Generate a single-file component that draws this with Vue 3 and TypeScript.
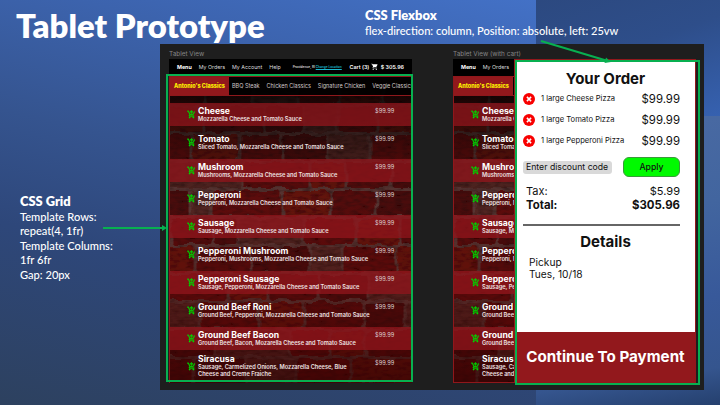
<script setup lang="ts">
interface MenuItem {
  name: string
  toppings: string
}
interface Brick {
  x: number
  y: number
  w: number
  h: number
  tone: string
}

const items: MenuItem[] = [
  { name: 'Cheese', toppings: 'Mozzarella Cheese and Tomato Sauce' },
  { name: 'Tomato', toppings: 'Sliced Tomato, Mozzarella Cheese and Tomato Sauce' },
  { name: 'Mushroom', toppings: 'Mushrooms, Mozzarella Cheese and Tomato Sauce' },
  { name: 'Pepperoni', toppings: 'Pepperoni, Mozzarella Cheese and Tomato Sauce' },
  { name: 'Sausage', toppings: 'Sausage, Mozzarella Cheese and Tomato Sauce' },
  { name: 'Pepperoni Mushroom', toppings: 'Pepperoni, Mushrooms, Mozzarella Cheese and Tomato Sauce' },
  { name: 'Pepperoni Sausage', toppings: 'Sausage, Pepperoni, Mozzarella Cheese and Tomato Sauce' },
  { name: 'Ground Beef Roni', toppings: 'Ground Beef, Pepperoni, Mozzarella Cheese and Tomato Sauce' },
  { name: 'Ground Beef Bacon', toppings: 'Ground Beef, Bacon, Mozarella Cheese and Tomato Sauce' },
  { name: 'Siracusa', toppings: 'Sausage, Carmelized Onions, Mozzarella Cheese, Blue\nCheese and Creme Fraiche' },
]
const allTabs = ['BBQ Steak', 'Chicken Classics', 'Signature Chicken', 'Veggie Classics']
const views = [
  { label: 'Tablet View', id: 'plain', cart: false, tabs: allTabs, links: ['My Orders', 'My Account', 'Help'] },
  { label: 'Tablet View (with cart)', id: 'order', cart: true, tabs: [], links: ['My Orders'] },
]
const order = ['1 large Cheese Pizza', '1 large Tomato Pizza', '1 large Pepperoni Pizza']

// Joint positions of every course of the brick wall, top to bottom.
const courses: number[][] = [
  [-10, 36, 84, 128, 170, 214, 260],
  [-14, 33, 94, 135, 168, 206, 260],
  [-30, 22, 70, 112, 158, 200, 260],
  [-20, 72, 140, 176, 222, 260],
  [-34, 20, 42, 112, 160, 206, 260],
  [0, 43, 68, 134, 186, 230, 260],
  [-20, 26, 80, 140, 172, 226, 260],
  [-8, 58, 98, 150, 198, 260],
  [-26, 30, 88, 134, 194, 236, 260],
  [-12, 46, 120, 160, 196, 260],
  [-30, 24, 76, 126, 180, 260],
]
const tones = ['#5a0d09', '#62100b', '#4e0a08', '#6a130b', '#552c27']
const bricks: Brick[] = courses.flatMap((joints, row) =>
  joints.slice(0, -1).map((x, i) => ({
    x: x + 1.5,
    y: row * 28 + 2,
    w: joints[i + 1] - x - 3,
    h: 25,
    tone: tones[(row * 3 + i * 2) % tones.length],
  })),
)
</script>

<template>
  <main class="slide">
    <h1 class="title">Tablet Prototype</h1>

    <section class="board">
      <figure v-for="view in views" :key="view.id" class="view">
        <figcaption>{{ view.label }}</figcaption>
        <div class="tablet" :class="{ covered: view.cart }">
          <header class="topbar">
            <b>Menu</b>
            <span v-for="link in view.links" :key="link">{{ link }}</span>
            <small v-if="!view.cart" class="place">Providence, RI <u>Change Location</u></small>
            <span v-if="!view.cart" class="basket">
              Cart (3)
              <svg viewBox="0 0 24 24"><path d="M7 18c-1.1 0-1.99.9-1.99 2S5.9 22 7 22s2-.9 2-2-.9-2-2-2zM1 2v2h2l3.6 7.59-1.35 2.45c-.16.28-.25.61-.25.96 0 1.1.9 2 2 2h12v-2H7.42c-.14 0-.25-.11-.25-.25l.03-.12.9-1.63h7.45c.75 0 1.41-.41 1.75-1.03l3.58-6.49A1 1 0 0 0 20 4H5.21l-.94-2H1zm16 16c-1.1 0-1.99.9-1.99 2s.89 2 1.99 2 2-.9 2-2-.9-2-2-2z" /></svg>
              $ 305.96
            </span>
          </header>
          <div class="body">
            <svg class="wall" viewBox="0 0 243 307">
              <defs>
                <filter :id="'rough-' + view.id" x="0" y="0" width="100%" height="100%">
                  <feTurbulence type="fractalNoise" baseFrequency="0.07" numOctaves="3" seed="4" result="n" />
                  <feDisplacementMap in="SourceGraphic" in2="n" scale="7" result="d" />
                  <feTurbulence type="fractalNoise" baseFrequency="0.12 0.3" numOctaves="2" seed="9" />
                  <feColorMatrix values="0 0 0 0 0  0 0 0 0 0  0 0 0 0 0  1.2 0 0 0 -0.42" result="g" />
                  <feMerge>
                    <feMergeNode in="d" />
                    <feMergeNode in="g" />
                  </feMerge>
                </filter>
                <linearGradient :id="'shade-' + view.id" x1="0" y1="0" x2="0" y2="1">
                  <stop offset="0" stop-color="#000" stop-opacity="0.88" />
                  <stop offset="0.14" stop-color="#080303" stop-opacity="0.6" />
                  <stop offset="0.26" stop-color="#180303" stop-opacity="0.36" />
                  <stop offset="0.4" stop-color="#300000" stop-opacity="0.1" />
                  <stop offset="0.7" stop-color="#480000" stop-opacity="0.3" />
                  <stop offset="1" stop-color="#300000" stop-opacity="0.66" />
                </linearGradient>
              </defs>
              <g :filter="`url(#rough-${view.id})`">
                <rect x="-10" y="-10" width="270" height="330" fill="#5c3a38" />
                <rect v-for="(b, i) in bricks" :key="i" :x="b.x" :y="b.y" :width="b.w" :height="b.h" :fill="b.tone" rx="2" />
              </g>
              <rect width="243" height="307" :fill="`url(#shade-${view.id})`" />
            </svg>
            <nav class="tabs">
              <b>Antonio's Classics</b>
              <span v-for="tab in view.tabs" :key="tab">{{ tab }}</span>
            </nav>
            <ul class="menu">
              <li v-for="item in items" :key="item.name">
                <svg viewBox="0 0 24 24"><path d="M11 9h2V6h3V4h-3V1h-2v3H8v2h3v3zm-4 9c-1.1 0-1.99.9-1.99 2S5.9 22 7 22s2-.9 2-2-.9-2-2-2zm10 0c-1.1 0-1.99.9-1.99 2s.89 2 1.99 2 2-.9 2-2-.9-2-2-2zm-9.83-3.25l.03-.12.9-1.63h7.45c.75 0 1.41-.41 1.75-1.03l3.86-7.01L19.42 4h-.01l-1.1 2-2.76 5H8.53l-.13-.27L6.16 6l-.95-2-.94-2H1v2h2l3.6 7.59-1.35 2.45c-.16.28-.25.61-.25.96 0 1.1.9 2 2 2h12v-2H7.42c-.13 0-.25-.11-.25-.25z" /></svg>
                <div class="dish">
                  <h3>{{ item.name }}</h3>
                  <p>{{ item.toppings }}</p>
                </div>
                <span v-if="!view.cart" class="price">$99.99</span>
              </li>
            </ul>
          </div>
          <aside v-if="view.cart" class="cart">
            <div class="sheet">
              <h2>Your Order</h2>
              <ul class="lines">
                <li v-for="line in order" :key="line">
                  <svg viewBox="0 0 12 12"><circle cx="6" cy="6" r="6" fill="#f80000" /><path d="M3.9 3.9l4.2 4.2M8.1 3.9L3.9 8.1" stroke="#fff" stroke-width="1.5" /></svg>
                  <span>{{ line }}</span>
                  <em>$99.99</em>
                </li>
              </ul>
              <div class="discount">
                <span class="code">Enter discount code</span>
                <button type="button">Apply</button>
              </div>
              <dl class="sums">
                <div><dt>Tax:</dt><dd>$5.99</dd></div>
                <div class="total"><dt>Total:</dt><dd>$305.96</dd></div>
              </dl>
              <hr />
              <h2>Details</h2>
              <p class="pickup">Pickup<br />Tues, 10/18</p>
            </div>
            <div class="pay">Continue To Payment</div>
          </aside>
        </div>
      </figure>
    </section>

    <aside class="note note-grid">
      <b>CSS Grid</b>
      <p>Template Rows:<br />repeat(4, 1fr)<br />Template Columns:<br />1fr 6fr<br />Gap: 20px</p>
    </aside>
    <aside class="note note-flex">
      <b>CSS Flexbox</b>
      <p>flex-direction: column, Position: absolute, left: 25vw</p>
    </aside>

    <svg class="marks" viewBox="0 0 720 405">
      <g fill="none" stroke="#08b050" stroke-width="2">
        <rect x="167" y="75" width="245" height="306" />
        <rect x="516" y="61" width="183" height="323" />
        <path d="M103 228H163" />
        <path d="M541 41L607 60.800" />
      </g>
      <path d="M162 225l5 3-5 3zM606 57.500l5 4.500-6.500 1z" fill="#08b050" />
    </svg>
  </main>
</template>

<style>
body {
  margin: 0;
  overflow: hidden;
}
</style>

<style scoped>
.slide {
  position: relative;
  display: grid;
  box-sizing: border-box;
  width: 720px;
  height: 405px;
  padding: 0 16px 15px;
  grid-template-rows: 44px 346px;
  justify-items: end;
  overflow: hidden;
  color: #fff;
  font-family: Lato, 'Open Sans', sans-serif;
  background:
    linear-gradient(160deg, #2c4980 0%, #2e4e8a 45%, #3661b0 100%) 536px 0 / 184px 116px no-repeat,
    linear-gradient(172deg, #4a6aa3 0%, #42659f 35%, #38599a 65%, #35558e 88%, #25406e 100%) 536px 116px / 184px 289px no-repeat,
    linear-gradient(194deg, #4371c6 0%, #3d65b1 18%, #35548f 45%, #2e477a 66%, #2d415f 100%) 0 0 / 536px 405px no-repeat;
}
h1, h2, h3, p, ul, dl, dd, figure {
  margin: 0;
  padding: 0;
}
ul {
  list-style: none;
}
.title {
  justify-self: start;
  font-size: 32.900px;
  line-height: 52px;
  font-weight: 800;
  white-space: nowrap;
}
.board {
  display: flex;
  box-sizing: border-box;
  width: 544px;
  height: 346px;
  padding: 4px 7px 0 9px;
  gap: 41px;
  background: #1e1e1e;
  font-family: Inter, sans-serif;
}
.view {
  width: 243px;
}
figcaption {
  height: 11px;
  font-size: 6.400px;
  line-height: 12px;
  color: #858585;
}
.tablet {
  position: relative;
  width: 243px;
  height: 324px;
  overflow: hidden;
}
.topbar {
  display: flex;
  align-items: center;
  box-sizing: border-box;
  height: 17px;
  padding: 0 8px 2px;
  gap: 7px;
  background: #000;
  color: #ddd;
  font-size: 5.300px;
  line-height: 8px;
  white-space: nowrap;
}
.topbar b {
  color: #fff;
}
.place {
  margin-left: 5px;
  font-size: 3.200px;
  font-weight: 600;
}
.place u {
  color: #1cb8cf;
}
.basket {
  display: flex;
  align-items: center;
  gap: 2px;
  margin-left: auto;
  color: #fff;
  font-weight: 600;
}
.basket svg {
  width: 7.500px;
  height: 7.500px;
  fill: #fff;
}
.body {
  position: relative;
  box-sizing: border-box;
  height: 307px;
  border: 1px solid #8f171b;
  background: #180c0a;
}
.covered .body {
  width: 62px;
  overflow: hidden;
}
.wall {
  position: absolute;
  left: 0;
  top: 0;
  width: 243px;
  height: 307px;
}
.tabs {
  position: relative;
  display: flex;
  align-items: center;
  height: 18px;
  gap: 7px;
  overflow: hidden;
  border-bottom: 1px solid #8f171b;
  background: rgba(0, 0, 0, 0.8);
  color: #d0c8c8;
  font-size: 5.500px;
  white-space: nowrap;
}
.tabs b {
  flex: none;
  width: 59px;
  margin-right: -4px;
  background: #92181c;
  color: #fff000;
  line-height: 18px;
  text-align: center;
  font-weight: 800;
}
.menu {
  position: relative;
  display: grid;
  width: 241px;
  grid-template-rows: 22.700px 33.300px 22.700px 33.300px 22.700px 33.300px 22.700px 33.300px 22.700px 33.300px;
  padding-top: 7px;
}
.menu li {
  display: flex;
  align-items: center;
  padding: 0 17px;
}
.menu li:nth-child(odd) {
  background: rgba(146, 22, 28, 0.75);
}
.menu svg {
  flex: none;
  width: 9px;
  height: 9px;
  margin: 0 2px 0 0;
  fill: #00d800;
  stroke: #00d800;
  stroke-width: 1;
}
.dish {
  width: 177px;
  flex: none;
}
.dish h3 {
  font-size: 8.650px;
  line-height: 10px;
  font-weight: 700;
  white-space: nowrap;
}
.dish p {
  color: #eee2e2;
  font-size: 5.650px;
  line-height: 7px;
  font-weight: 600;
  white-space: pre;
}
.price {
  margin-bottom: 8px;
  color: #ddd0d0;
  font-size: 5.700px;
}
.cart {
  position: absolute;
  left: 61px;
  top: 0;
  display: flex;
  flex-direction: column;
  box-sizing: border-box;
  width: 182px;
  height: 324px;
  padding: 3px 2px 0 3px;
  background: #92181c;
  color: #111;
}
.sheet {
  box-sizing: border-box;
  width: 178px;
  height: 270px;
  padding: 8px 15px 0 6px;
  background: #fff;
}
.sheet h2 {
  font-size: 15px;
  line-height: 18px;
  font-weight: 700;
  text-align: center;
  margin-left: 8px;
}
.lines li {
  display: flex;
  align-items: center;
  height: 21.200px;
}
.lines svg {
  width: 12px;
  height: 12px;
  margin-right: 6px;
}
.lines span {
  font-size: 7.600px;
}
.lines em {
  margin-left: auto;
  font-size: 11.400px;
  font-style: normal;
}
.discount {
  display: flex;
  align-items: center;
  justify-content: space-between;
  margin-top: 5.500px;
}
.code {
  width: 86px;
  height: 13px;
  padding-left: 3px;
  border-radius: 3px;
  background: #d9d9d9;
  font-size: 8.700px;
  line-height: 13px;
}
button {
  box-sizing: border-box;
  width: 57px;
  height: 20px;
  padding: 0;
  border: 1px solid #3a9a3a;
  border-radius: 6px;
  background: #00fa00;
  color: #111;
  font: 500 8.700px Inter, sans-serif;
}
.sums {
  margin: 7px 0 0 3px;
  font-size: 11px;
  line-height: 14px;
}
.sums div {
  display: flex;
  justify-content: space-between;
}
.total {
  font-size: 11.400px;
  font-weight: 700;
}
hr {
  height: 2px;
  margin: 12px 0 6.500px;
  border: 0;
  background: #666;
}
.pickup {
  margin: 5px 0 0 6px;
  font-size: 10.200px;
  line-height: 12.500px;
}
.pay {
  height: 51px;
  color: #fff;
  font-size: 15.200px;
  line-height: 49px;
  font-weight: 700;
  text-align: center;
  white-space: nowrap;
}
.note {
  position: absolute;
  font-size: 11.100px;
  line-height: 14.500px;
  font-weight: 500;
  white-space: nowrap;
}
.note b {
  display: block;
  font-size: 12.900px;
  line-height: 15.500px;
  font-weight: 800;
}
.note-grid {
  left: 20px;
  top: 194px;
}
.note-flex {
  left: 365px;
  top: 8px;
}
.marks {
  position: absolute;
  left: 0;
  top: 0;
  width: 720px;
  height: 405px;
}
</style>
